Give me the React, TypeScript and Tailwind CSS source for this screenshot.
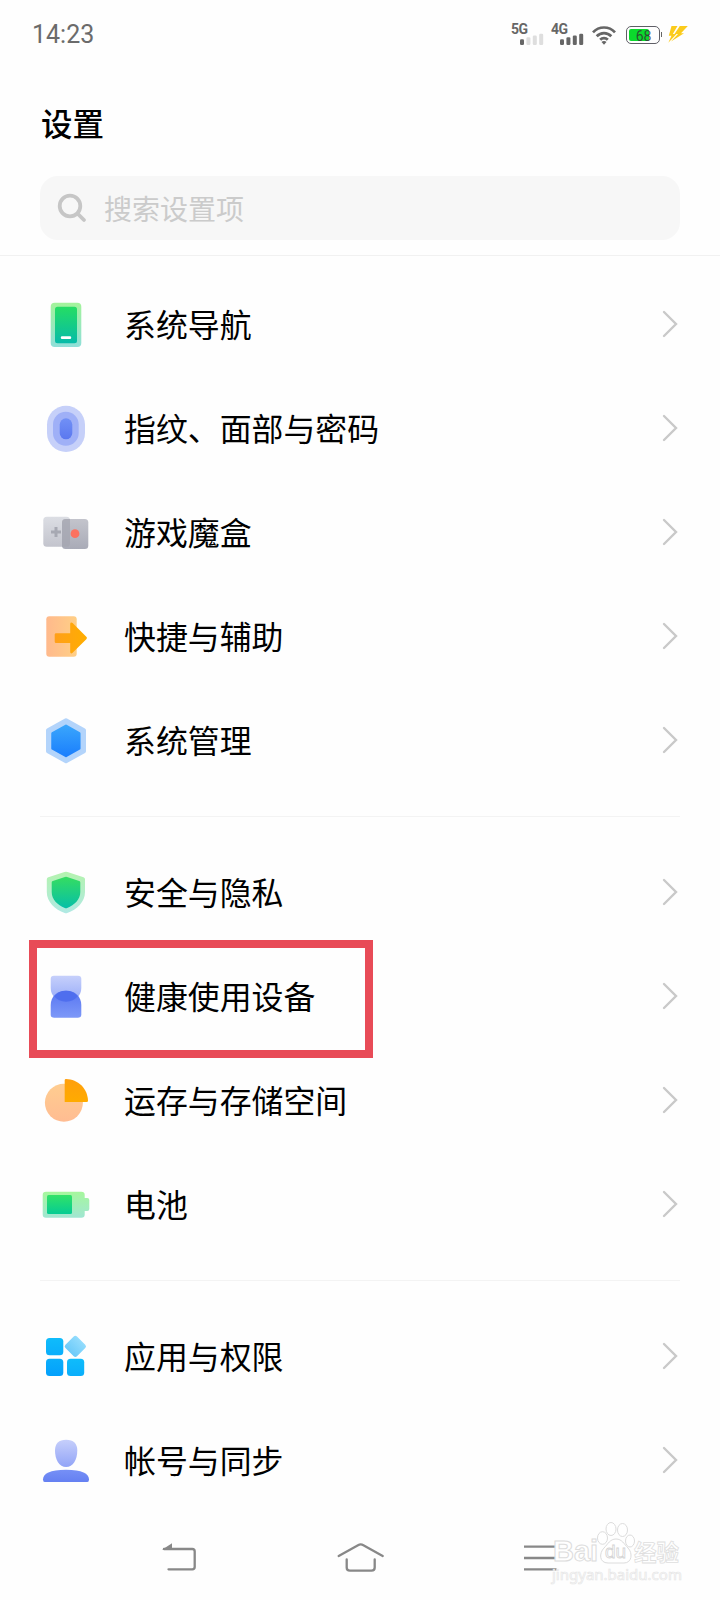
import type { ReactNode } from "react";

type Item = {
  label: string;
  icon: ReactNode;
  highlighted?: boolean;
};

function Gradient({ id, from, to }: { id: string; from: string; to: string }) {
  return (
    <linearGradient id={id} x1="0" y1="0" x2="0" y2="1">
      <stop offset="0" stopColor={from} />
      <stop offset="1" stopColor={to} />
    </linearGradient>
  );
}

function Icon({ children }: { children: ReactNode }) {
  return (
    <svg className="h-12 w-12 shrink-0" viewBox="0 0 48 48" fill="none">
      {children}
    </svg>
  );
}

const navigationIcon = (
  <Icon>
    <defs>
      <Gradient id="navOuter" from="#a3f39a" to="#8fdfd9" />
      <Gradient id="navInner" from="#25dd63" to="#06bba9" />
    </defs>
    <rect x="8.7" y="1.7" width="30.6" height="44.3" rx="4" fill="url(#navOuter)" />
    <rect x="13" y="5.7" width="22" height="36.5" rx="2.5" fill="url(#navInner)" />
    <rect x="18.8" y="35.2" width="10.4" height="2.8" rx="1.2" fill="#fff" />
  </Icon>
);

const fingerprintIcon = (
  <Icon>
    <defs>
      <Gradient id="fpInner" from="#7190f6" to="#5b78ef" />
    </defs>
    <rect x="5" y="0.8" width="38" height="46.2" rx="19" fill="#c6d0f9" />
    <rect x="11" y="6.8" width="25.7" height="34" rx="12.8" fill="#9fb0f7" />
    <rect x="17.7" y="13.3" width="12.6" height="21" rx="6.3" fill="url(#fpInner)" />
  </Icon>
);

const gameIcon = (
  <Icon>
    <defs>
      <Gradient id="gameLeft" from="#dcdee4" to="#c3c4cd" />
      <Gradient id="gameRight" from="#c3c4cc" to="#a9abb7" />
    </defs>
    <rect x="1.3" y="7.7" width="26.7" height="30" rx="3.5" fill="url(#gameLeft)" />
    <rect x="20" y="10" width="26.3" height="30" rx="3.5" fill="url(#gameRight)" />
    <path d="M20 13.5A3.5 3.5 0 0 1 23.5 10H28V34.5A3.2 3.2 0 0 1 25 37.7H20Z" fill="#a4a6b0" fillOpacity="0.75" />
    <path d="M14 18v10M9 23h10" stroke="#a7a9b3" strokeWidth="3" />
    <circle cx="33" cy="24.7" r="4.4" fill="#fb7260" />
  </Icon>
);

const shortcutIcon = (
  <Icon>
    <defs>
      <linearGradient id="scBack" x1="0" y1="0" x2="1" y2="0">
        <stop offset="0" stopColor="#ffb98c" />
        <stop offset="1" stopColor="#ffcf86" />
      </linearGradient>
      <linearGradient id="scArrow" x1="0" y1="0" x2="1" y2="0">
        <stop offset="0" stopColor="#ff9f1a" />
        <stop offset="1" stopColor="#ffae00" />
      </linearGradient>
    </defs>
    <rect x="4.3" y="3.3" width="30.4" height="40.4" rx="3" fill="url(#scBack)" />
    <path
      d="M14 20.3H28.2V11C28.2 9.3 29.5 8.9 30.6 10L44.3 23.8C45.1 24.6 45.1 25.4 44.3 26.2L30.6 39.8C29.5 40.9 28.2 40.4 28.2 38.8V30H14Q12.7 30 12.7 28.7V21.6Q12.7 20.3 14 20.3Z"
      fill="url(#scArrow)"
    />
  </Icon>
);

const systemIcon = (
  <Icon>
    <defs>
      <Gradient id="sysInner" from="#39a5fc" to="#1b7ffd" />
    </defs>
    <path
      d="M24 3.2L42 13.3V34.2L24 44.3L6 34.2V13.3Z"
      fill="#b3d4fb"
      stroke="#b3d4fb"
      strokeWidth="4"
      strokeLinejoin="round"
    />
    <path
      d="M24 8.8L37.3 16.4V31.4L24 39L10.5 31.4V16.4Z"
      fill="url(#sysInner)"
      stroke="url(#sysInner)"
      strokeWidth="2.5"
      strokeLinejoin="round"
    />
  </Icon>
);

const securityIcon = (
  <Icon>
    <defs>
      <Gradient id="secOuter" from="#b4f3ae" to="#b0e9e4" />
      <Gradient id="secInner" from="#35dd60" to="#06bfa8" />
    </defs>
    <path
      d="M22.5 3Q24 2.4 25.5 3L41.5 8.2Q43 8.7 43 10.3V23C43 33 35 40.5 25.3 44Q24 44.5 22.7 44C13 40.5 4.8 33 4.8 23V10.3Q4.8 8.7 6.3 8.2Z"
      fill="url(#secOuter)"
    />
    <path
      d="M22.9 7.9Q24 7.5 25.1 7.9L37.2 12Q38.3 12.4 38.3 13.5V23C38.3 30.5 32.5 36 25.2 39Q24 39.5 22.8 39C15.5 36 9.7 30.5 9.7 23V13.5Q9.7 12.4 10.8 12Z"
      fill="url(#secInner)"
    />
  </Icon>
);

const healthIcon = (
  <Icon>
    <defs>
      <Gradient id="hTop" from="#c6d0fb" to="#97aaf8" />
      <Gradient id="hBottom" from="#5876f1" to="#7d98f8" />
    </defs>
    <path d="M12 2.7H36Q39.3 2.7 39.3 6V15C39.3 23 33 28.7 24 28.7S8.7 23 8.7 15V6Q8.7 2.7 12 2.7Z" fill="url(#hTop)" />
    <path d="M12 44.7H36Q39.3 44.7 39.3 41.4V32C39.3 23.5 33 17.7 24 17.7S8.7 23.5 8.7 32V41.4Q8.7 44.7 12 44.7Z" fill="url(#hBottom)" />
    <path d="M12.2 23.3C14.9 19.7 19.1 17.7 24 17.7S33.1 19.7 35.8 23.3C33.1 26.8 29 28.7 24 28.7S14.9 26.8 12.2 23.3Z" fill="#4f6eee" />
  </Icon>
);

const storageIcon = (
  <Icon>
    <defs>
      <Gradient id="stBack" from="#ffcd90" to="#ffbc92" />
      <Gradient id="stWedge" from="#ff9f0d" to="#ffab00" />
    </defs>
    <circle cx="21.9" cy="25.8" r="19" fill="url(#stBack)" />
    <path d="M22.7 3.2Q22.7 2 24 2C36 2.3 45.5 11.5 46 23.5Q46 25 44.7 25H22.7Z" fill="url(#stWedge)" />
  </Icon>
);

const batteryIcon = (
  <Icon>
    <defs>
      <Gradient id="batOuter" from="#a6f79c" to="#a0e6d2" />
      <Gradient id="batInner" from="#31e267" to="#05cc93" />
    </defs>
    <path
      d="M4 10.7H39.4Q42.7 10.7 42.7 14V17H45.3Q47.3 17 47.3 19V28Q47.3 30 45.3 30H42.7V33.4Q42.7 36.7 39.4 36.7H4Q0.7 36.7 0.7 33.4V14Q0.7 10.7 4 10.7Z"
      fill="url(#batOuter)"
    />
    <rect x="5" y="14" width="25" height="19" rx="1.5" fill="url(#batInner)" />
  </Icon>
);

const appsIcon = (
  <Icon>
    <defs>
      <Gradient id="appA" from="#0fbcfb" to="#0aaefb" />
      <Gradient id="appB" from="#0aaefb" to="#03a0fc" />
      <Gradient id="appC" from="#93dcfd" to="#6bcaf9" />
    </defs>
    <rect x="4" y="5" width="17.3" height="17.2" rx="3.5" fill="url(#appA)" />
    <rect x="4" y="25.7" width="17.3" height="17.3" rx="3.5" fill="url(#appB)" />
    <rect x="25" y="25.7" width="17.2" height="17.3" rx="3.5" fill="url(#appA)" />
    <rect x="25.2" y="5.2" width="16.3" height="16.3" rx="2.3" fill="url(#appC)" transform="rotate(45 33.35 13.35)" />
  </Icon>
);

const accountIcon = (
  <Icon>
    <defs>
      <Gradient id="accHead" from="#c6cffb" to="#92a4f7" />
      <Gradient id="accBody" from="#7690f6" to="#6580f2" />
    </defs>
    <path d="M24.1 2.7C31.5 2.7 35.3 6.5 35.3 13.5C35.3 22.5 31 30 24.1 30S13 22.5 13 13.5C13 6.5 16.8 2.7 24.1 2.7Z" fill="url(#accHead)" />
    <path d="M1 42.5C1 36.5 8 32.7 24 32.7S47 36.5 47 42.5Q47 45 45.3 45H2.7Q1 45 1 42.5Z" fill="url(#accBody)" />
  </Icon>
);

const groups: Item[][] = [
  [
    { label: "系统导航", icon: navigationIcon },
    { label: "指纹、面部与密码", icon: fingerprintIcon },
    { label: "游戏魔盒", icon: gameIcon },
    { label: "快捷与辅助", icon: shortcutIcon },
    { label: "系统管理", icon: systemIcon },
  ],
  [
    { label: "安全与隐私", icon: securityIcon },
    { label: "健康使用设备", icon: healthIcon, highlighted: true },
    { label: "运存与存储空间", icon: storageIcon },
    { label: "电池", icon: batteryIcon },
  ],
  [
    { label: "应用与权限", icon: appsIcon },
    { label: "帐号与同步", icon: accountIcon },
  ],
];

function Signal({ label, level }: { label: string; level: number }) {
  const heights = [5.7, 7.7, 9.5, 11.3];
  return (
    <div className="relative h-5 w-8">
      <span className="absolute left-[-1px] top-[-1px] font-[Roboto,sans-serif] text-[14px] leading-[10px] font-bold tracking-[-0.5px] text-[#666]">
        {label}
      </span>
      <svg className="h-5 w-8" viewBox="0 0 32 20">
        {heights.map((h, i) => (
          <rect key={h} x={8 + i * 6.4} y={20 - h} width="4" height={h} rx="1.2" fill={i < level ? "#666" : "#dedede"} />
        ))}
      </svg>
    </div>
  );
}

function StatusBar() {
  return (
    <div className="flex h-[68px] shrink-0 items-center justify-between pt-px pl-8 pr-8">
      <span className="font-[Roboto,sans-serif] text-[25px] leading-none text-[#6b6b6b]">14:23</span>
      <div className="flex items-center">
        <Signal label="5G" level={1} />
        <div className="ml-2">
          <Signal label="4G" level={4} />
        </div>
        <svg className="ml-2 h-5 w-6" viewBox="0 0 24 20" fill="none" stroke="#666" strokeWidth="2.7">
          <path d="M1 7.3C7 0.9 17 0.9 23 7.3" />
          <path d="M4.7 11.2C8.8 7 15.2 7 19.3 11.2" />
          <path d="M8.2 14.8C10.3 12.6 13.7 12.6 15.8 14.8" />
          <path d="M12 19.7L9.5 17C10.8 15.7 13.2 15.7 14.5 17Z" fill="#666" stroke="none" />
        </svg>
        <div className="ml-[10px] flex items-center">
          <div className="relative flex h-[18px] w-[34px] rounded-[5px] border-[1.5px] border-[#5f5f66] p-[2px]">
            <div className="h-full w-[20px] rounded-[2px] bg-[#0bd92c]" />
            <span className="absolute inset-0 flex items-center justify-center pt-[2px] pl-px font-[Roboto,sans-serif] text-[14px] leading-[14px] text-[#333]/85">
              68
            </span>
          </div>
          <div className="ml-px h-[5px] w-px bg-[#666]" />
        </div>
        <svg className="ml-[6px] h-[17px] w-5" viewBox="0 0 20 17" fill="#fbcb1c">
          <path d="M3.5 0H9.5L4.8 8H8.5L0.3 16.7L3.5 9.8H0.8Z" />
          <path d="M11.8 0H19.8L13 7.2H16L3 15.5L10 8H6.5Z" />
        </svg>
      </div>
    </div>
  );
}

function Row({ item }: { item: Item }) {
  return (
    <li className="relative flex h-[104px] items-center pl-[42px] pr-[42px]">
      {item.icon}
      <span className="mb-0.5 ml-[34px] flex-1 text-[31.9px] leading-none text-black">{item.label}</span>
      <svg className="mb-0.5 h-7 w-4" viewBox="0 0 16 28" fill="none" stroke="#c9c9c9" strokeWidth="2.4" strokeLinecap="round">
        <path d="M2 2L14 14L2 26" />
      </svg>
      {item.highlighted && (
        <div className="absolute left-[29px] top-[-5px] h-[118px] w-[344px] border-8 border-[#e84b57]" />
      )}
    </li>
  );
}

function Watermark() {
  return (
    <div className="absolute right-[36px] bottom-[17px] w-[132px] text-white">
      <div className="flex h-[42px] items-end">
        <span className="w-[45px] pl-px font-['Liberation_Sans',sans-serif] text-[29px] leading-[25px] font-bold [-webkit-text-stroke:1px_#dcdcdc]">
          Bai
        </span>
        <div className="relative h-[42px] w-[37px]">
          <svg className="h-[42px] w-[38px]" viewBox="0 0 38 42" fill="#fff" stroke="#dcdcdc">
            <ellipse cx="5.5" cy="16" rx="5" ry="6.3" />
            <ellipse cx="14" cy="7" rx="5" ry="6.5" />
            <ellipse cx="25.5" cy="8" rx="5" ry="6.5" />
            <ellipse cx="33" cy="19" rx="4.5" ry="6" />
            <path d="M19 17C25 17 27 22 31 26C36 31 35 41 27 41H11C2 41 2 31 7 26C11 22 13 17 19 17Z" />
          </svg>
          <span className="absolute left-[8px] top-[21px] font-['Liberation_Sans',sans-serif] text-[19px] leading-[18px] [-webkit-text-stroke:0.8px_#d4d4d4]">
            du
          </span>
        </div>
        <span className="text-[22.5px] leading-[26px] font-bold [-webkit-text-stroke:0.8px_#dedede]">经验</span>
      </div>
      <div className="mt-px font-['Noto_Sans',sans-serif] text-[15px] leading-[18px] whitespace-nowrap [-webkit-text-stroke:0.7px_#e6e6e6]">
        jingyan.baidu.com
      </div>
    </div>
  );
}

function NavBar() {
  return (
    <div className="relative flex h-[87px] shrink-0 items-center justify-between pt-[3px] pl-[161px] pr-[161px]">
      <svg className="h-8 w-9" viewBox="161 1542 36 32" fill="none" stroke="#888" strokeWidth="2.3" strokeLinecap="round">
        <path d="M164 1549H192.3Q194.7 1549 194.7 1551.5V1567Q194.7 1569.3 192.3 1569.3H168.5" />
        <path d="M162 1549.8L172 1543.2V1549.8Z" fill="#888" stroke="none" />
      </svg>
      <svg className="h-8 w-12" viewBox="336 1542 48 32" fill="none" stroke="#888" strokeWidth="2.3" strokeLinecap="round">
        <path d="M338.7 1556L358 1545.2Q360.7 1543.7 363.4 1545.2L382.7 1556" />
        <path d="M346.7 1559.5V1567.5Q346.7 1570.7 349.9 1570.7H371.5Q374.7 1570.7 374.7 1567.5V1559.5" />
      </svg>
      <svg className="h-8 w-9" viewBox="523 1542 36 32" fill="none" stroke="#888" strokeWidth="2.3">
        <path d="M524 1546.7H556.5M524 1558H556.5M524 1569.3H556.5" />
      </svg>
      <Watermark />
    </div>
  );
}

export default function App() {
  return (
    <div className="flex h-[1600px] w-[720px] flex-col overflow-hidden bg-[#fefefe] font-['Noto_Sans_CJK_SC',sans-serif]">
      <StatusBar />
      <header className="flex h-[188px] shrink-0 flex-col border-b border-[#f1f1f1] px-10">
        <h1 className="mt-[38px] pl-px text-[31.5px] leading-[32px] font-medium text-black">设置</h1>
        <div className="mt-[38px] flex h-16 items-center rounded-[18px] bg-[#f7f7f7] pl-[17px]">
          <svg className="h-[30px] w-[30px]" viewBox="0 0 30 30" fill="none" stroke="#c6c6c6" strokeWidth="3.8" strokeLinecap="round">
            <circle cx="13" cy="13" r="10.3" />
            <path d="M21 21L27 27" />
          </svg>
          <span className="ml-[17px] text-[28px] leading-none text-[#cbcbcb]">搜索设置项</span>
        </div>
      </header>
      <main className="flex flex-1 flex-col pt-[17px]">
        {groups.map((items, i) => (
          <section key={i}>
            {i > 0 && <div className="mx-10 mt-[23px] mb-6 h-px bg-[#f3f3f3]" />}
            <ul>
              {items.map((item) => (
                <Row key={item.label} item={item} />
              ))}
            </ul>
          </section>
        ))}
      </main>
      <NavBar />
    </div>
  );
}
